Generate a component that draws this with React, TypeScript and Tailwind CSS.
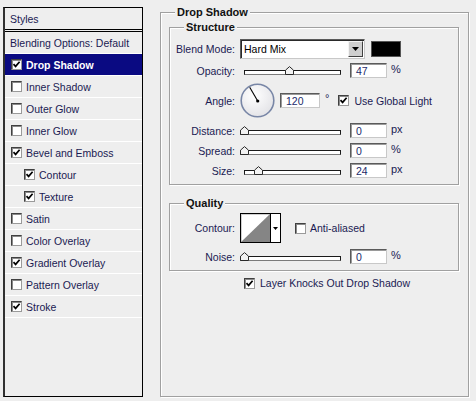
const font = { fontFamily: '"Liberation Sans", Arial, sans-serif' };

type Item = { label: string; checked?: boolean; active?: boolean; indent?: boolean };

const items: Item[] = [
  { label: 'Drop Shadow', checked: true, active: true },
  { label: 'Inner Shadow' },
  { label: 'Outer Glow' },
  { label: 'Inner Glow' },
  { label: 'Bevel and Emboss', checked: true },
  { label: 'Contour', checked: true, indent: true },
  { label: 'Texture', checked: true, indent: true },
  { label: 'Satin' },
  { label: 'Color Overlay' },
  { label: 'Gradient Overlay', checked: true },
  { label: 'Pattern Overlay' },
  { label: 'Stroke', checked: true },
];

function Checkbox({ checked }: { checked?: boolean }) {
  return (
    <div className="w-[11px] h-[11px] shrink-0 bg-white border border-t-[#404040] border-l-[#404040] border-r-[#9a9a9a] border-b-[#9a9a9a] shadow-[inset_1px_1px_0_#8a8a8a] flex items-center justify-center">
      {checked && (
        <svg width="9" height="9" viewBox="0 0 9 9">
          <path d="M1.5 4.2 L3.6 6.4 L7.6 1.8" fill="none" stroke="#000" strokeWidth="1.7" />
        </svg>
      )}
    </div>
  );
}

function Field({ value, w = 'w-[37px]' }: { value: string; w?: string }) {
  return (
    <div className={`${w} h-[15px] bg-white border border-t-[#5a5a5a] border-l-[#5a5a5a] border-r-[#c8c8c8] border-b-[#c8c8c8] shadow-[inset_1px_1px_0_#9a9a9a] pl-[5px] flex items-center text-[#1a2a6a] text-[10.5px]`}>
      {value}
    </div>
  );
}

function Slider({ inset, thumb }: { inset?: boolean; thumb: number }) {
  return (
    <div className="relative w-[101px] h-[15px] flex items-end pb-[3px]">
      <div className={`${inset ? 'ml-[4px] w-[97px]' : 'w-[101px]'} h-[5px] bg-white border border-[#1a1a1a] border-b-[#7a7a7a]`} />
      <svg className="absolute bottom-[3px]" style={{ left: thumb }} width="9" height="9" viewBox="0 0 9 9">
        <path d="M0.5 8.5 L0.5 4.2 L4.5 0.6 L8.5 4.2 L8.5 8.5 Z" fill="#f2f2f2" stroke="#2a2a2a" />
      </svg>
    </div>
  );
}

function Label({ children }: { children: string }) {
  return <div className="w-[65px] shrink-0 text-right text-[#1a1a52] text-[10.5px]">{children}</div>;
}

function SliderRow({ label, inset, thumb, value, unit }: { label: string; inset?: boolean; thumb: number; value: string; unit: string }) {
  return (
    <div className="flex items-center h-[15px] mt-[5px]">
      <Label>{label}</Label>
      <div className="ml-[5px]">
        <Slider inset={inset} thumb={thumb} />
      </div>
      <div className="ml-[9px]">
        <Field value={value} />
      </div>
      <div className="ml-[4px] text-[#1a1a52] -mt-[3px] text-[11px]">{unit}</div>
    </div>
  );
}

function Group({ title, className, children }: { title: string; className: string; children: React.ReactNode }) {
  return (
    <div className={`relative border border-[#a0a0a0] shadow-[1px_1px_0_#ffffff,inset_1px_1px_0_#ffffff] ${className}`}>
      <div className="absolute left-[14px] -top-[7px] px-[2px] bg-[#eeeeee] font-bold text-[11px] leading-[13px] text-[#111]">
        {title}
      </div>
      {children}
    </div>
  );
}

export default function App() {
  return (
    <div className="w-[476px] h-[401px] bg-[#eeeeee] flex text-[10.5px] leading-[12px] overflow-hidden" style={font}>
      {/* styles list */}
      <div className="ml-[3px] mt-[7px] w-[140px] h-[390px] border border-black border-l-2 border-l-[#303030] flex flex-col">
        <div className="h-[24px] shrink-0 pl-[5px] flex items-center text-[#1a1a52] border-b-[3px] border-double border-b-black">Styles</div>
        <div className="h-[22px] shrink-0 pl-[5px] flex items-center text-[#1a1a52] border-b border-white">Blending Options: Default</div>
        {items.map((it) => (
          <div
            key={it.label}
            className={`h-[22px] shrink-0 flex items-center border-b border-white ${it.indent ? 'pl-[19px]' : 'pl-[6px]'} ${
              it.active ? 'bg-[#0a0a82] text-white font-bold' : 'text-[#1a1a52]'
            }`}
          >
            <Checkbox checked={it.checked} />
            <span className="ml-[4px]">{it.label}</span>
          </div>
        ))}
      </div>

      {/* settings */}
      <Group title="Drop Shadow" className="ml-[17px] mt-[12px] w-[309px] h-[385px] pl-[8px] pt-[14px]">
        <Group title="Structure" className="w-[290px] h-[158px] pt-[11px]">
          <div className="flex items-center h-[20px]">
            <Label>Blend Mode:</Label>
            <div className="ml-[5px] w-[125px] h-[20px] flex bg-white border border-t-[#5a5a5a] border-l-[#5a5a5a] border-r-[#c8c8c8] border-b-[#c8c8c8] shadow-[inset_1px_1px_0_#2a2a2a]">
              <div className="flex-1 pl-[3px] flex items-center text-black text-[10.5px]">Hard Mix</div>
              <div className="w-[15px] h-[16px] mt-[1px] mr-[1px] bg-[#cfcfcf] border border-t-[#f4f4f4] border-l-[#f4f4f4] border-r-[#404040] border-b-[#404040] flex items-center justify-center">
                <svg width="7" height="4" viewBox="0 0 7 4">
                  <path d="M0 0 H7 L3.5 4 Z" fill="#000" />
                </svg>
              </div>
            </div>
            <div className="ml-[6px] w-[30px] h-[16px] bg-black border border-[#555]" />
          </div>

          <div className="flex items-center h-[15px] mt-[4px]">
            <Label>Opacity:</Label>
            <div className="ml-[5px]">
              <Slider inset thumb={45} />
            </div>
            <div className="ml-[9px]">
              <Field value="47" />
            </div>
            <div className="ml-[4px] text-[#1a1a52] -mt-[3px] text-[11px]">%</div>
          </div>

          <div className="flex items-center h-[35px] mt-[5px]">
            <Label>Angle:</Label>
            <svg className="ml-[5px] shrink-0" width="35" height="35" viewBox="0 0 35 35">
              <defs>
                <radialGradient id="dial" cx="0.4" cy="0.35" r="0.7">
                  <stop offset="0" stopColor="#ffffff" />
                  <stop offset="1" stopColor="#e2e2e6" />
                </radialGradient>
              </defs>
              <circle cx="17.5" cy="17.5" r="16.3" fill="url(#dial)" stroke="#7886a6" strokeWidth="1.6" />
              <line x1="17.7" y1="18" x2="9.7" y2="4.3" stroke="#000" strokeWidth="1.1" />
              <circle cx="17.7" cy="18" r="1.6" fill="#000" />
            </svg>
            <div className="ml-[5px]">
              <Field value="120" w="w-[40px]" />
            </div>
            <div className="ml-[5px] self-start mt-[9px] text-[#1a1a52] text-[11px]">°</div>
            <div className="ml-[9px]">
              <Checkbox checked />
            </div>
            <div className="ml-[5px] text-[#1a1a52]">Use Global Light</div>
          </div>

          <SliderRow label="Distance:" thumb={0} value="0" unit="px" />
          <SliderRow label="Spread:" thumb={0} value="0" unit="%" />
          <SliderRow label="Size:" inset thumb={14} value="24" unit="px" />
        </Group>

        <Group title="Quality" className="mt-[18px] w-[290px] h-[68px] pt-[9px]">
          <div className="flex items-center h-[30px]">
            <Label>Contour:</Label>
            <div className="ml-[5px] w-[41px] h-[30px] border border-black bg-white flex">
              <svg width="29" height="28" viewBox="0 0 29 28" className="shrink-0">
                <rect x="0.5" y="0.5" width="28" height="27" fill="#fff" stroke="#d0d0d0" />
                <path d="M0 28 L29 0 L29 28 Z" fill="#858585" />
              </svg>
              <div className="flex-1 border-l border-black flex items-center justify-center">
                <svg width="5" height="3" viewBox="0 0 5 3">
                  <path d="M0 0 H5 L2.5 3 Z" fill="#000" />
                </svg>
              </div>
            </div>
            <div className="ml-[14px]">
              <Checkbox />
            </div>
            <div className="ml-[4px] text-[#1a1a52]">Anti-aliased</div>
          </div>
          <div className="flex items-center h-[15px] mt-[6px]">
            <Label>Noise:</Label>
            <div className="ml-[5px]">
              <Slider thumb={0} />
            </div>
            <div className="ml-[9px]">
              <Field value="0" />
            </div>
            <div className="ml-[4px] text-[#1a1a52] -mt-[3px] text-[11px]">%</div>
          </div>
        </Group>

        <div className="flex items-center mt-[6px] pl-[75px]">
          <Checkbox checked />
          <span className="ml-[5px] text-[#1a1a52]">Layer Knocks Out Drop Shadow</span>
        </div>
      </Group>
    </div>
  );
}
